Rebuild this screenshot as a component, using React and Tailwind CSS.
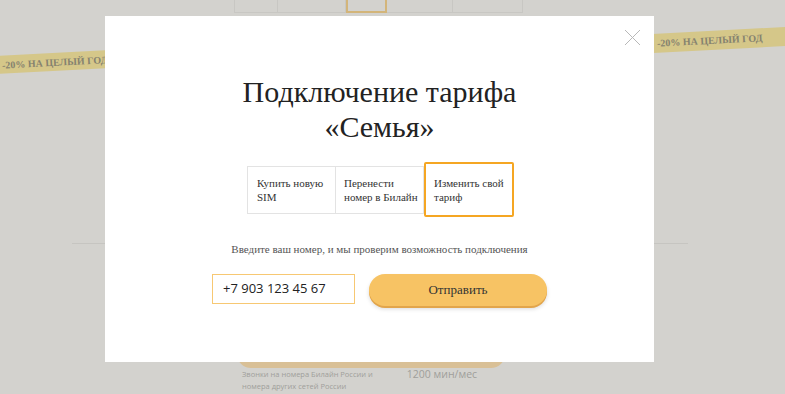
import React from "react";

const serif = { fontFamily: '"Liberation Serif", "DejaVu Serif", serif' };

export default function App() {
  return (
    <div className="relative w-[785px] h-[394px] overflow-hidden bg-[#d3d2ce]" style={{ fontFamily: '"Liberation Sans", sans-serif' }}>
      {/* background page content */}
      <div className="flex h-[13px] ml-[234px]">
        <div className="w-[44px] border border-t-0 border-[#c8c7c3]" />
        <div className="w-[68px] border border-t-0 border-l-0 border-[#c8c7c3]" />
        <div className="w-[41px] border-2 border-t-0 border-[#d3b57a]" />
        <div className="w-[66px] border border-t-0 border-l-0 border-[#c8c7c3]" />
        <div className="w-[70px] border border-t-0 border-l-0 border-[#c8c7c3]" />
      </div>
      <div className="mt-[230px] ml-[72px] mr-[97px] h-[1px] bg-[#c6c5c1]" />
      <div className="mt-[107px] ml-[237px] w-[268px] h-[17px] rounded-b-[14px] bg-[#d9c096]" />
      <div className="ml-[242px] mt-[0px] flex gap-[34px] text-[#a09f9b]">
        <div className="text-[7.5px] leading-[12px]" style={{ fontFamily: '"Open Sans", sans-serif' }}>
          <div>Звонки на номера Билайн России и</div>
          <div>номера других сетей России</div>
        </div>
        <div className="text-[10.5px] leading-[12px]" style={{ fontFamily: '"Open Sans", sans-serif' }}>1200 мин/мес</div>
      </div>

      {/* ribbons */}
      <div className="absolute left-[-10px] top-[53px] w-[125px] h-[18px] bg-[#d5c789] -rotate-[3deg] flex items-center pl-[12px] whitespace-nowrap">
        <span className="text-[10px] font-bold text-[#85826f]" style={serif}>-20% НА ЦЕЛЫЙ ГОД</span>
      </div>
      <div className="absolute left-[648px] top-[30px] w-[160px] h-[19px] bg-[#d5c789] -rotate-[3deg] flex items-center pl-[9px] whitespace-nowrap">
        <span className="text-[10px] font-bold text-[#85826f]" style={serif}>-20% НА ЦЕЛЫЙ ГОД</span>
      </div>

      {/* modal */}
      <div className="absolute left-[105px] top-[16px] w-[549px] h-[346px] bg-white flex flex-col items-center">
        <button className="absolute" style={{ left: 519, top: 13 }}>
          <svg width="17" height="17" viewBox="0 0 17 17" className="block">
            <path d="M1 1 L16 16 M16 1 L1 16" stroke="#b8b8b8" strokeWidth="1" fill="none" />
          </svg>
        </button>
        <h1 className="mt-[58px] text-[30px] leading-[35px] text-[#222] text-center" style={serif}>
          Подключение тарифа<br />«Семья»
        </h1>
        <div className="mt-[18px] flex items-center ml-[2px]">
          <div className="w-[89px] h-[48px] border border-[#e3e3e3] flex items-center pl-[9px] text-[11px] leading-[14px] text-[#333]" style={serif}>
            Купить новую<br />SIM
          </div>
          <div className="w-[88px] h-[48px] border border-l-0 border-[#e3e3e3] flex items-center pl-[8px] text-[11px] leading-[14px] text-[#333]" style={serif}>
            Перенести<br />номер в Билайн
          </div>
          <div className="w-[90px] h-[55px] border-2 border-[#f5a623] rounded-[2px] flex items-center pl-[8px] text-[11px] leading-[14px] text-[#333]" style={serif}>
            Изменить свой<br />тариф
          </div>
        </div>
        <p className="mt-[24px] text-[11px] text-[#555]" style={serif}>
          Введите ваш номер, и мы проверим возможность подключения
        </p>
        <div className="mt-[16px] flex items-start gap-[14px]">
          <div className="w-[143px] h-[30px] border border-[#f7c873] flex items-center pl-[10px] text-[13px] text-[#222]" style={{ fontFamily: '"Open Sans", sans-serif' }}>
            +7 903 123 45 67
          </div>
          <button className="w-[178px] h-[32px] rounded-full bg-[#f7c364] shadow-[0_2px_0_#e2a54b,0_3px_4px_rgba(0,0,0,0.15)] text-[13px] text-[#333]" style={serif}>
            Отправить
          </button>
        </div>
      </div>
    </div>
  );
}
